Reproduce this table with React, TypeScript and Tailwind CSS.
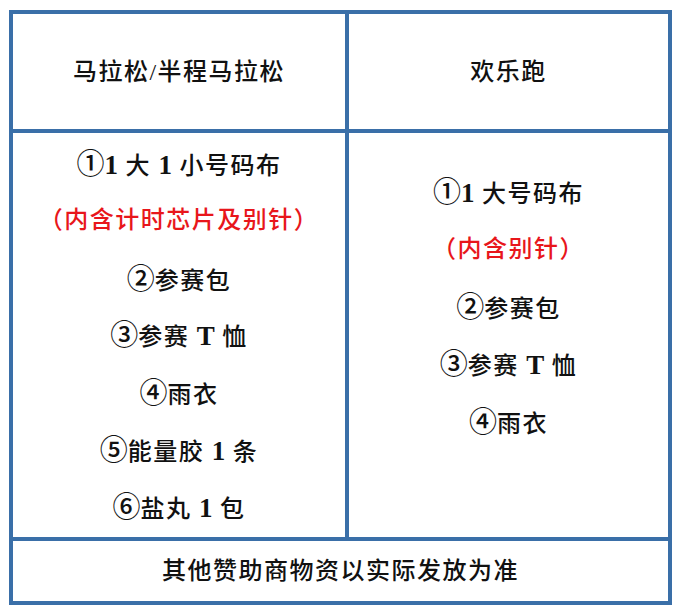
import React from "react";

const font = { fontFamily: '"Liberation Serif", "Noto Sans CJK SC", serif' };

function Rich({ text }: { text: string }) {
  const parts = text.split(/([①②③④⑤⑥]|[0-9A-Z]+)/).filter((p) => p !== "");
  return (
    <>
      {parts.map((p, i) => {
        if (/^[①②③④⑤⑥]$/.test(p))
          return (
            <span key={i} className="font-['Noto_Sans_CJK_SC'] text-[28px] leading-none font-medium tracking-[0px]">
              {p}
            </span>
          );
        if (/^[0-9A-Z]+$/.test(p))
          return (
            <span key={i} className="text-[27px] leading-none font-bold tracking-[0px]">
              {p}
            </span>
          );
        return (
          <span key={i} className="leading-none">
            {p}
          </span>
        );
      })}
    </>
  );
}

export default function App() {
  const left = [
    { t: "①1 大 1 小号码布" },
    { t: "（内含计时芯片及别针）", red: true },
    { t: "②参赛包" },
    { t: "③参赛 T 恤" },
    { t: "④雨衣" },
    { t: "⑤能量胶 1 条" },
    { t: "⑥盐丸 1 包" },
  ];
  const right = [
    { t: "①1 大号码布" },
    { t: "（内含别针）", red: true },
    { t: "②参赛包" },
    { t: "③参赛 T 恤" },
    { t: "④雨衣" },
    { t: "\u00a0" },
  ];
  return (
    <div
      className="w-[676px] h-[609px] bg-white pt-[10px] pl-[9px] text-[#111] text-[24px] font-medium tracking-[1.5px]"
      style={font}
    >
      <div className="w-[663px] h-[595px] border-4 border-[#3a6fa8] flex flex-col">
        <div className="flex h-[115px]">
          <div className="w-[336px] border-r-4 border-[#3a6fa8] flex items-center justify-center">
            马拉松/半程马拉松
          </div>
          <div className="flex-1 flex items-center justify-center">欢乐跑</div>
        </div>
        <div className="flex h-[408px] border-t-4 border-[#3a6fa8]">
          <div className="w-[336px] border-r-4 border-[#3a6fa8] flex flex-col items-center justify-center">
            {left.map((l, i) => (
              <div
                key={i}
                className={`h-[57.33px] flex items-center whitespace-pre ${l.red ? "text-[#e8161b]" : ""}`}
              >
                <div className="leading-none">
                  <Rich text={l.t} />
                </div>
              </div>
            ))}
          </div>
          <div className="flex-1 flex flex-col items-center justify-center">
            {right.map((l, i) => (
              <div
                key={i}
                className={`h-[57.33px] flex items-center whitespace-pre ${l.red ? "text-[#e8161b]" : ""}`}
              >
                <div className="leading-none">
                  <Rich text={l.t} />
                </div>
              </div>
            ))}
          </div>
        </div>
        <div className="flex-1 border-t-4 border-[#3a6fa8] flex items-center justify-center">
          其他赞助商物资以实际发放为准
        </div>
      </div>
    </div>
  );
}
